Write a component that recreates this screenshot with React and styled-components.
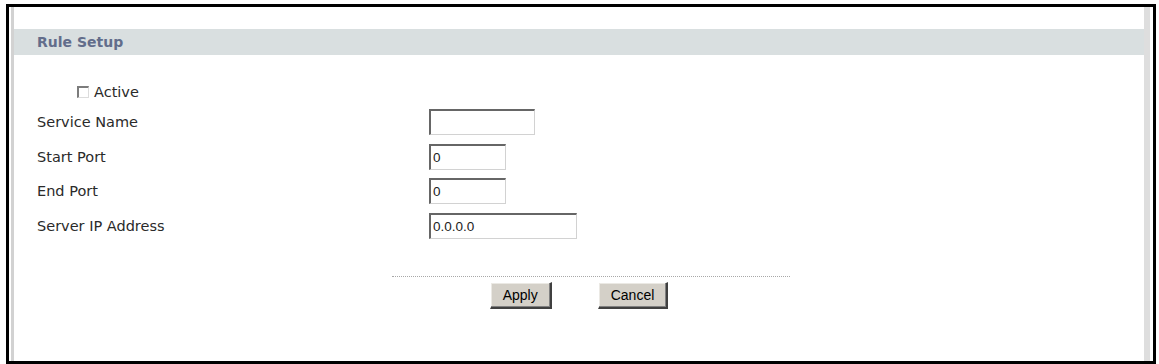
import styled, { createGlobalStyle } from "styled-components";

const GlobalStyle = createGlobalStyle`
  html, body {
    margin: 0;
    padding: 0;
    background: #ffffff;
  }
  body {
    font-family: "DejaVu Sans", Verdana, sans-serif;
  }
`;

const Frame = styled.div`
  box-sizing: border-box;
  width: 1150px;
  height: 360px;
  margin: 4px 0 0 6px;
  border: 3px solid #000;
  background: #fff;
  display: flex;
  overflow: hidden;
`;

const Panel = styled.div`
  flex: 1;
  margin: 0 3px 0 2px;
  border-left: 3px solid #d2d2d2;
  border-right: 6px solid #dedede;
  padding-top: 22px;
  display: flex;
  flex-direction: column;
`;

const Header = styled.div`
  height: 26px;
  display: flex;
  align-items: center;
  padding-left: 23px;
  background: #d9dfe0;
  color: #626d8b;
  font-weight: bold;
  font-size: 14px;
`;

const Body = styled.div`
  padding-left: 23px;
  color: #2a2a2a;
  font-size: 14.5px;
`;

const CheckRow = styled.label`
  height: 26px;
  margin-top: 24px;
  display: flex;
  align-items: center;
  gap: 5px;
  padding-left: 40px;
`;

const Box = styled.span`
  box-sizing: border-box;
  width: 12px;
  height: 12px;
  background: #fff;
  border-top: 2px solid #7c7c7c;
  border-left: 2px solid #7c7c7c;
  border-right: 1px solid #dcdcdc;
  border-bottom: 1px solid #dcdcdc;
`;

const Form = styled.div`
  display: grid;
  grid-template-columns: 392px auto;
  grid-auto-rows: 26px;
  row-gap: 8.5px;
  align-items: center;
  margin-top: 4px;
`;

const Label = styled.span``;

const Field = styled.input`
  box-sizing: border-box;
  display: block;
  width: ${(p) => p.$w}px;
  height: 26px;
  margin: 0;
  padding: 0 2px;
  border-top: 2px solid #666;
  border-left: 2px solid #666;
  border-right: 1px solid #d2d2d2;
  border-bottom: 1px solid #d2d2d2;
  background: #fff;
  font-family: "Liberation Sans", Arial, sans-serif;
  font-size: 13.5px;
  color: #222;
  outline: none;
`;

const Footer = styled.div`
  margin-top: 37px;
  display: flex;
  flex-direction: column;
`;

const Dots = styled.div`
  width: 398px;
  margin-left: 378px;
  border-top: 1px dotted #a8a8a8;
`;

const Buttons = styled.div`
  display: flex;
  justify-content: center;
  gap: 46px;
  margin-top: 5px;
`;

const Button = styled.button`
  box-sizing: border-box;
  height: 27px;
  padding: 0 12px;
  background: #d4d0c8;
  border-top: 1px solid #fff;
  border-left: 1px solid #fff;
  border-right: 2px solid #404040;
  border-bottom: 2px solid #404040;
  box-shadow: inset -1px -1px #808080, inset 1px 1px #ebe9e4;
  font-family: "Liberation Sans", Arial, sans-serif;
  font-size: 14px;
  color: #000;
  cursor: pointer;
`;

const fields = [
  { label: "Service Name", value: "", w: 106 },
  { label: "Start Port", value: "0", w: 77 },
  { label: "End Port", value: "0", w: 77 },
  { label: "Server IP Address", value: "0.0.0.0", w: 148 },
];

export default function App() {
  return (
    <>
      <GlobalStyle />
      <Frame>
        <Panel>
          <Header>Rule Setup</Header>
          <Body>
            <CheckRow>
              <Box />
              <span>Active</span>
            </CheckRow>
            <Form>
              {fields.flatMap((f) => [
                <Label key={f.label}>{f.label}</Label>,
                <div key={f.label + "-in"}>
                  <Field $w={f.w} defaultValue={f.value} />
                </div>,
              ])}
            </Form>
          </Body>
          <Footer>
            <Dots />
            <Buttons>
              <Button>Apply</Button>
              <Button>Cancel</Button>
            </Buttons>
          </Footer>
        </Panel>
      </Frame>
    </>
  );
}
